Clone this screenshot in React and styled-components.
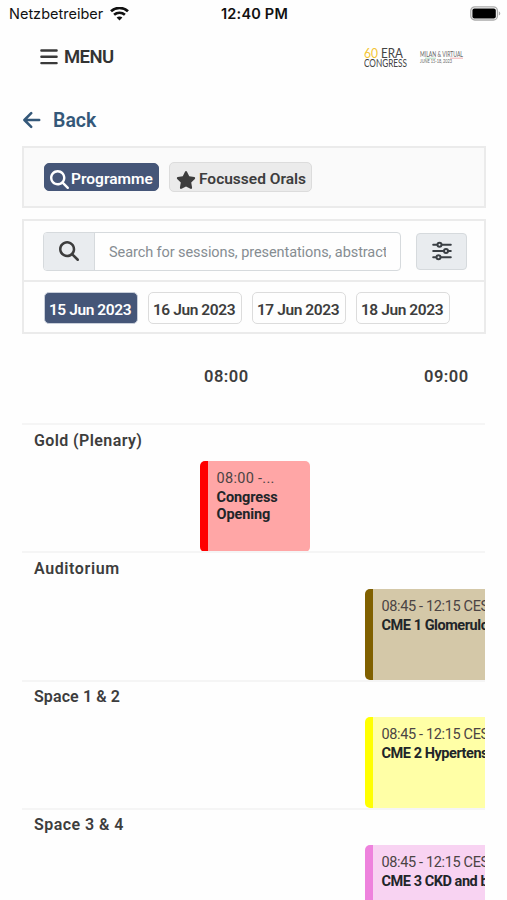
import React from 'react';
import styled, {createGlobalStyle} from 'styled-components';
import {FaMagnifyingGlass, FaStar} from 'react-icons/fa6';

const Navy = '#455678';
const TextColor = '#3d3d3d';
const PanelLine = '#ebebeb';

const GlobalStyle = createGlobalStyle`
  * {
    box-sizing: border-box;
  }

  body {
    margin: 0;
    background: #fefefe;
    color: ${TextColor};
    font-family: Roboto, 'Liberation Sans', sans-serif;
    overflow: hidden;
  }

  button {
    font-family: inherit;
  }
`;

const Page = styled.div`
  width: 507px;
  height: 900px;
  overflow: hidden;
`;

const StatusBar = styled.div`
  display: grid;
  grid-template-columns: 1fr auto 1fr;
  align-items: center;
  height: 27px;
  padding: 0 6px 0 9px;
  font-family: Inter, sans-serif;
  font-size: 14.5px;
  color: #111;
`;

const Carrier = styled.div`
  display: flex;
  align-items: center;
  gap: 7px;
`;

const Clock = styled.div`
  padding-right: 1px;
  font-weight: 600;
  font-size: 14.5px;
  letter-spacing: 0.2px;
`;

const BatterySlot = styled.div`
  display: flex;
  justify-content: flex-end;
`;

const Header = styled.header`
  display: flex;
  align-items: center;
  height: 59px;
  padding: 1px 43px 0 40px;
`;

const MenuButton = styled.button`
  display: flex;
  align-items: center;
  gap: 6px;
  padding: 0;
  border: none;
  background: none;
  color: #333;
  font-size: 18.5px;
  font-weight: 600;
  letter-spacing: -0.6px;
`;

const LogoSlot = styled.div`
  display: flex;
  margin-left: auto;
`;

const BackLink = styled.a`
  display: flex;
  align-items: center;
  gap: 12px;
  height: 24px;
  margin: 22px 0 0 23px;
  color: #345879;
  font-size: 19.5px;
  font-weight: 600;
`;

const Panel = styled.section`
  margin: ${(props) => props.$top}px 21.5px 0 22px;
  border: 2px solid ${PanelLine};
  background: ${(props) => props.$bg || '#fefefe'};
`;

const TabRow = styled.div`
  display: flex;
  align-items: center;
  gap: 10px;
  height: 58px;
  padding-left: 20px;
`;

const Tab = styled.button`
  display: flex;
  align-items: center;
  gap: ${(props) => (props.$active ? 2 : 3)}px;
  width: ${(props) => props.$width}px;
  height: ${(props) => (props.$active ? 28 : 30)}px;
  padding: 3px 0 0 ${(props) => (props.$active ? 5 : 6)}px;
  border: 1px solid ${(props) => (props.$active ? Navy : '#dcdcdc')};
  border-radius: 5px;
  background: ${(props) => (props.$active ? Navy : '#ebebeb')};
  color: ${(props) => (props.$active ? '#fff' : TextColor)};
  font-size: 15.5px;
  font-weight: 600;
  white-space: nowrap;

  svg {
    margin-top: 2px;
  }
`;

const SearchRow = styled.div`
  display: flex;
  align-items: center;
  gap: 15px;
  height: 61px;
  padding: 1px 16px 0 19px;
  border-bottom: 2px solid ${PanelLine};
`;

const SearchGroup = styled.div`
  display: flex;
  width: 358px;
  height: 39px;
  border: 1px solid #d6dadd;
  border-radius: 4px;
  overflow: hidden;
`;

const SearchAddon = styled.div`
  display: flex;
  align-items: center;
  justify-content: center;
  width: 51px;
  border-right: 1px solid #d6dadd;
  background: #e9ecef;
`;

const SearchField = styled.div`
  flex: 1;
  margin: 0 14px;
  overflow: hidden;
  white-space: nowrap;
  color: #868d92;
  font-size: 14.5px;
  line-height: 40px;
  letter-spacing: -0.08px;
`;

const FilterButton = styled.button`
  display: flex;
  align-items: center;
  justify-content: center;
  width: 51px;
  height: 37px;
  padding: 0;
  border: 1px solid #d6dadd;
  border-radius: 4px;
  background: #e9ecef;
`;

const DateRow = styled.div`
  display: flex;
  align-items: center;
  gap: 10px;
  height: 50px;
  padding: 2px 0 0 19.5px;
`;

const DateButton = styled.button`
  width: 94px;
  height: 32px;
  padding: 3px 1px 0 0;
  border: 1px solid ${(props) => (props.$active ? '#c9cfda' : '#dcdcdc')};
  border-radius: 5px;
  background: ${(props) => (props.$active ? Navy : '#fefefe')};
  color: ${(props) => (props.$active ? '#fff' : TextColor)};
  font-size: 15.5px;
  font-weight: 600;
  letter-spacing: -0.42px;
  white-space: nowrap;
`;

const Schedule = styled.section`
  margin: 0 22px;
  overflow: hidden;
`;

const TimeAxis = styled.div`
  display: flex;
  height: 89px;
  padding: 33px 0 0 182px;
`;

const TimeLabel = styled.div`
  flex: 0 0 220px;
  font-size: 16.5px;
  font-weight: 600;
  line-height: 20px;
  letter-spacing: 0.5px;
`;

const RoomRow = styled.div`
  height: 128.3px;
  border-top: 2px solid #f5f5f5;
`;

const RoomName = styled.div`
  height: 35.5px;
  padding: 5.5px 0 0 12px;
  font-size: 16px;
  font-weight: 600;
  line-height: 20px;
  letter-spacing: ${(props) => props.$spacing || 0}px;
`;

const EventCard = styled.article`
  width: ${(props) => props.$width}px;
  height: 91px;
  margin-left: ${(props) => props.$start}px;
  padding: 8px 16px 0 8.5px;
  border-left: 8px solid ${(props) => props.$accent};
  border-radius: 5px;
  background: ${(props) => props.$bg};
  overflow: hidden;
`;

const EventTime = styled.div`
  white-space: nowrap;
  color: #4b4444;
  font-size: 14.5px;
  line-height: 19px;
  letter-spacing: ${(props) => (props.$wrap ? 0.3 : -0.35)}px;
`;

const EventTitle = styled.div`
  margin-top: 1px;
  color: #212529;
  font-size: 14.5px;
  font-weight: 700;
  line-height: 17.5px;
  letter-spacing: ${(props) => (props.$wrap ? -0.1 : -0.45)}px;
  white-space: ${(props) => (props.$wrap ? 'normal' : 'nowrap')};
`;

function WifiIcon() {
  return (
    <svg width="19" height="14" viewBox="0 0 19 14" fill="none" stroke="#111">
      <path d="M1 4.3C5.7-.1 13.3-.1 18 4.3" strokeWidth="2.7" />
      <path d="M4.1 7.8c3-2.8 7.8-2.8 10.8 0" strokeWidth="2.6" />
      <path d="M9.5 13.4 6.6 10.5c1.6-1.5 4.2-1.5 5.8 0z" fill="#111" stroke="none" />
    </svg>
  );
}

function BatteryIcon() {
  return (
    <svg width="31" height="15" viewBox="0 0 31 15">
      <rect x="0.8" y="0.8" width="26.6" height="13.2" rx="4" fill="#fff" stroke="#aaa" strokeWidth="1.3" />
      <rect x="2.4" y="2.4" width="23.4" height="10" rx="2" fill="#000" />
      <path d="M28.8 5.2c2 .8 2 3.6 0 4.4z" fill="#aaa" />
    </svg>
  );
}

function BarsIcon() {
  return (
    <svg width="18" height="16" viewBox="0 0 18 16" stroke="#3a3a3a" strokeWidth="2.4" strokeLinecap="round">
      <path d="M1.4 1.5h15.2M1.4 7.8h15.2M1.4 14.1h15.2" />
    </svg>
  );
}

function BackArrow() {
  return (
    <svg
      width="18"
      height="18"
      viewBox="0 0 18 18"
      fill="none"
      stroke="currentColor"
      strokeWidth="2.5"
      strokeLinecap="round"
      strokeLinejoin="round"
    >
      <path d="M8.2 2.2 1.4 9l6.8 6.8M1.8 9h14.4" />
    </svg>
  );
}

function SlidersIcon() {
  return (
    <svg width="20" height="20" viewBox="0 0 20 20" fill="#e9ecef" stroke="#3a3f44" strokeWidth="2" strokeLinecap="round">
      <path d="M1.2 3.8h17.6M1.2 10h17.6M1.2 16.2h17.6" />
      <circle cx="7.5" cy="3.8" r="2" />
      <circle cx="14" cy="10" r="2" />
      <circle cx="6.5" cy="16.2" r="2" />
    </svg>
  );
}

function CongressLogo() {
  return (
    <svg width="100" height="24" viewBox="0 0 100 24" fontFamily="Lato, sans-serif" fill="#444">
      <text x="0" y="12.5" fontSize="14" fill="#f4c534" textLength="14" lengthAdjust="spacingAndGlyphs">60</text>
      <text x="17" y="12.5" fontSize="14" textLength="22" lengthAdjust="spacingAndGlyphs">ERA</text>
      <text x="0" y="21.8" fontSize="10.5" textLength="43" lengthAdjust="spacingAndGlyphs">CONGRESS</text>
      <text x="56" y="12.3" fontSize="7" fill="#666" textLength="43" lengthAdjust="spacingAndGlyphs">MILAN &amp; VIRTUAL</text>
      <text x="56" y="18.4" fontSize="6" fill="#666" textLength="32" lengthAdjust="spacingAndGlyphs">JUNE 15-18, 2023</text>
      <path d="M61 13.2h11" stroke="#8fd0a8" strokeWidth="0.7" />
      <path d="M86 13.2h13" stroke="#ee8f95" strokeWidth="0.7" />
    </svg>
  );
}

const dates = ['15 Jun 2023', '16 Jun 2023', '17 Jun 2023', '18 Jun 2023'];

const rooms = [
  {
    name: 'Gold (Plenary)',
    spacing: 0.4,
    time: '08:00 -...',
    title: 'Congress Opening',
    start: 178,
    width: 110,
    accent: '#ff0000',
    bg: '#ffa6a6',
    wrap: true,
  },
  {
    name: 'Auditorium',
    spacing: 0.6,
    time: '08:45 - 12:15 CEST',
    title: 'CME 1 Glomerulonephritis',
    start: 343,
    width: 770,
    accent: '#806000',
    bg: '#d4c8a8',
  },
  {
    name: 'Space 1 & 2',
    spacing: 0.1,
    time: '08:45 - 12:15 CEST',
    title: 'CME 2 Hypertension',
    start: 343,
    width: 770,
    accent: '#ffff00',
    bg: '#ffffa6',
  },
  {
    name: 'Space 3 & 4',
    spacing: 0.45,
    time: '08:45 - 12:15 CEST',
    title: 'CME 3 CKD and bone',
    start: 343,
    width: 770,
    accent: '#ee82dd',
    bg: '#f8d3f2',
  },
];

export default function App() {
  return (
    <Page>
      <GlobalStyle />
      <StatusBar>
        <Carrier>
          Netzbetreiber
          <WifiIcon />
        </Carrier>
        <Clock>12:40 PM</Clock>
        <BatterySlot>
          <BatteryIcon />
        </BatterySlot>
      </StatusBar>

      <Header>
        <MenuButton>
          <BarsIcon />
          MENU
        </MenuButton>
        <LogoSlot>
          <CongressLogo />
        </LogoSlot>
      </Header>

      <BackLink>
        <BackArrow />
        Back
      </BackLink>

      <Panel $top={14} $bg="#fafafa">
        <TabRow>
          <Tab $active $width={115}>
            <FaMagnifyingGlass size={19} />
            Programme
          </Tab>
          <Tab $width={143}>
            <FaStar size={20} />
            Focussed Orals
          </Tab>
        </TabRow>
      </Panel>

      <Panel $top={11}>
        <SearchRow>
          <SearchGroup>
            <SearchAddon>
              <FaMagnifyingGlass size={20} />
            </SearchAddon>
            <SearchField>Search for sessions, presentations, abstracts</SearchField>
          </SearchGroup>
          <FilterButton>
            <SlidersIcon />
          </FilterButton>
        </SearchRow>
        <DateRow>
          {dates.map((date, i) => (
            <DateButton key={date} $active={i === 0}>
              {date}
            </DateButton>
          ))}
        </DateRow>
      </Panel>

      <Schedule>
        <TimeAxis>
          <TimeLabel>08:00</TimeLabel>
          <TimeLabel>09:00</TimeLabel>
        </TimeAxis>
        {rooms.map((room) => (
          <RoomRow key={room.name}>
            <RoomName $spacing={room.spacing}>{room.name}</RoomName>
            <EventCard
              $start={room.start}
              $width={room.width}
              $accent={room.accent}
              $bg={room.bg}
            >
              <EventTime $wrap={room.wrap}>{room.time}</EventTime>
              <EventTitle $wrap={room.wrap}>{room.title}</EventTitle>
            </EventCard>
          </RoomRow>
        ))}
      </Schedule>
    </Page>
  );
}
